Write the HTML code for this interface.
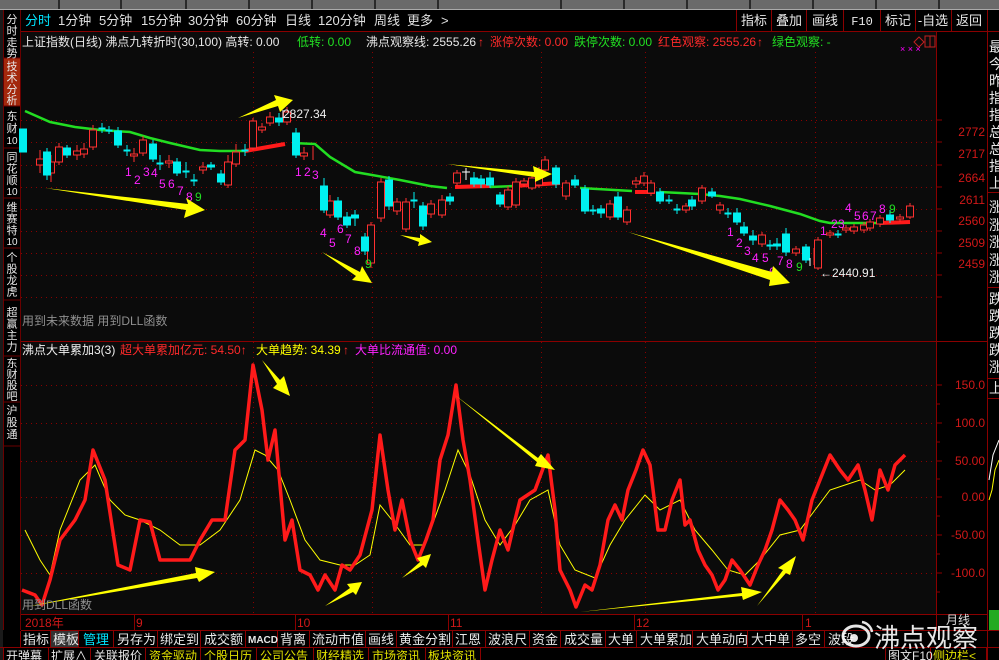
<!DOCTYPE html>
<html><head><meta charset="utf-8"><style>
html,body{margin:0;padding:0;background:#000;width:999px;height:660px;overflow:hidden}
svg{display:block;font-family:"Liberation Sans","Noto Sans CJK SC",sans-serif}
</style></head><body>
<svg width="999" height="660" viewBox="0 0 999 660" xmlns="http://www.w3.org/2000/svg">
<rect width="999" height="660" fill="#000"/>
<rect x="0" y="0" width="999" height="9" fill="#6a6a6a"/>
<g fill="#2a2a2a"><rect x="58" y="0" width="2" height="9"/><rect x="120" y="0" width="2" height="9"/><rect x="185" y="0" width="2" height="9"/><rect x="248" y="0" width="2" height="9"/><rect x="311" y="0" width="2" height="9"/><rect x="374" y="0" width="2" height="9"/><rect x="437" y="0" width="2" height="9"/><rect x="560" y="0" width="2" height="9"/><rect x="623" y="0" width="2" height="9"/><rect x="686" y="0" width="2" height="9"/><rect x="749" y="0" width="2" height="9"/><rect x="812" y="0" width="2" height="9"/><rect x="875" y="0" width="2" height="9"/><rect x="938" y="0" width="2" height="9"/></g>
<rect x="0" y="9" width="999" height="1" fill="#aaa"/>
<rect x="21" y="32" width="915" height="582" fill="#0b0b0b"/>
<rect x="0" y="10" width="3" height="650" fill="#1a1a1a"/>
<rect x="3" y="58" width="17" height="48" fill="#a3280c"/>
<g stroke="#6a0000" stroke-width="1"><line x1="3.5" y1="10" x2="3.5" y2="630"/><line x1="20.5" y1="10" x2="20.5" y2="630"/>
<line x1="3" y1="58" x2="20" y2="58"/><line x1="3" y1="106" x2="20" y2="106"/><line x1="3" y1="148" x2="20" y2="148"/><line x1="3" y1="198" x2="20" y2="198"/><line x1="3" y1="248" x2="20" y2="248"/><line x1="3" y1="300" x2="20" y2="300"/><line x1="3" y1="356" x2="20" y2="356"/><line x1="3" y1="402" x2="20" y2="402"/><line x1="3" y1="446" x2="20" y2="446"/></g>
<g fill="#e8e8e8" font-size="11" text-anchor="middle">
<text x="12" y="23">分</text><text x="12" y="34.5">时</text><text x="12" y="46">走</text><text x="12" y="57">势</text>
<text x="12" y="70">技</text><text x="12" y="81.5">术</text><text x="12" y="93">分</text><text x="12" y="104">析</text>
<text x="12" y="120">东</text><text x="12" y="132">财</text><text x="12" y="144" font-size="10">10</text>
<text x="12" y="161">同</text><text x="12" y="172.5">花</text><text x="12" y="184">顺</text><text x="12" y="195" font-size="10">10</text>
<text x="12" y="211">维</text><text x="12" y="222.5">赛</text><text x="12" y="234">特</text><text x="12" y="245" font-size="10">10</text>
<text x="12" y="261">个</text><text x="12" y="272.5">股</text><text x="12" y="284">龙</text><text x="12" y="295.5">虎</text>
<text x="12" y="316">超</text><text x="12" y="327.5">赢</text><text x="12" y="339">主</text><text x="12" y="350.5">力</text>
<text x="12" y="367">东</text><text x="12" y="378">财</text><text x="12" y="389">股</text><text x="12" y="400">吧</text>
<text x="12" y="414">沪</text><text x="12" y="426">股</text><text x="12" y="438">通</text>
</g>
<g font-size="13" fill="#e0e0e0">
<text x="25" y="25" fill="#00e5ff">分时</text><text x="58" y="25">1分钟</text><text x="99" y="25">5分钟</text><text x="141" y="25">15分钟</text><text x="188" y="25">30分钟</text><text x="236" y="25">60分钟</text><text x="285" y="25">日线</text><text x="318" y="25">120分钟</text><text x="374" y="25">周线</text><text x="407" y="25">更多</text><text x="441" y="25">&gt;</text>
</g>
<g stroke="#8a0000" stroke-width="1" fill="none">
<line x1="21" y1="31.5" x2="999" y2="31.5"/>
<line x1="736.5" y1="10" x2="736.5" y2="31"/><line x1="771.5" y1="10" x2="771.5" y2="31"/><line x1="806.5" y1="10" x2="806.5" y2="31"/><line x1="843.5" y1="10" x2="843.5" y2="31"/><line x1="880.5" y1="10" x2="880.5" y2="31"/><line x1="915.5" y1="10" x2="915.5" y2="31"/><line x1="951.5" y1="10" x2="951.5" y2="31"/><line x1="987.5" y1="10" x2="987.5" y2="31"/>
</g>
<g font-size="13" fill="#e8e8e8" text-anchor="middle">
<text x="754" y="25">指标</text><text x="789" y="25">叠加</text><text x="825" y="25">画线</text><text x="862" y="25" font-size="12" font-family="Liberation Mono,monospace">F10</text><text x="898" y="25">标记</text><text x="933" y="25">-自选</text><text x="969" y="25">返回</text>
</g>
<g font-size="12">
<text x="22" y="46" fill="#e8e8e8">上证指数(日线) 沸点九转折时(30,100) 高转: 0.00</text>
<text x="297" y="46" fill="#22e022">低转: 0.00</text>
<text x="366" y="46" fill="#e8e8e8">沸点观察线: 2555.26</text>
<text x="478" y="46" fill="#ff2a2a">↑</text>
<text x="490" y="46" fill="#ff2a2a">涨停次数: 0.00</text>
<text x="574" y="46" fill="#22e022">跌停次数: 0.00</text>
<text x="658" y="46" fill="#ff2a2a">红色观察: 2555.26</text>
<text x="757" y="46" fill="#ff2a2a">↑</text>
<text x="772" y="46" fill="#22e022">绿色观察: -</text>
</g>
<g stroke="#c02020" fill="none"><path d="M914 42 l5 -5 l5 5 l-5 5z"/><rect x="925" y="36" width="10" height="11"/><line x1="930" y1="36" x2="930" y2="47"/></g>
<g fill="#ff00ff" font-size="9"><text x="900" y="52">× × ×</text></g>
<g stroke="#8a0000" stroke-width="1">
<line x1="936.5" y1="32" x2="936.5" y2="630"/>
<line x1="987.5" y1="32" x2="987.5" y2="660"/>
<line x1="21" y1="341.5" x2="988" y2="341.5"/>
<line x1="21" y1="614.5" x2="988" y2="614.5"/>
<line x1="21" y1="630.5" x2="999" y2="630.5"/>
<line x1="0" y1="647.5" x2="999" y2="647.5"/>
</g>
<g stroke="#8a0000" stroke-dasharray="1,4" stroke-width="1">
<line x1="21" y1="120.5" x2="936" y2="120.5"/><line x1="21" y1="142.5" x2="936" y2="142.5"/><line x1="21" y1="165.5" x2="936" y2="165.5"/><line x1="21" y1="187.5" x2="936" y2="187.5"/><line x1="21" y1="209.5" x2="936" y2="209.5"/><line x1="21" y1="231.5" x2="936" y2="231.5"/><line x1="21" y1="253.5" x2="936" y2="253.5"/><line x1="21" y1="275.5" x2="936" y2="275.5"/><line x1="21" y1="297.5" x2="936" y2="297.5"/>
<line x1="21" y1="385.5" x2="936" y2="385.5"/><line x1="21" y1="423.5" x2="936" y2="423.5"/><line x1="21" y1="461.5" x2="936" y2="461.5"/><line x1="21" y1="497.5" x2="936" y2="497.5"/><line x1="21" y1="535.5" x2="936" y2="535.5"/><line x1="21" y1="573.5" x2="936" y2="573.5"/>
<line x1="253.5" y1="52" x2="253.5" y2="614"/><line x1="372.5" y1="52" x2="372.5" y2="614"/><line x1="541.5" y1="52" x2="541.5" y2="614"/><line x1="645.5" y1="52" x2="645.5" y2="614"/><line x1="815.5" y1="52" x2="815.5" y2="614"/>
</g>
<g stroke="#8a0000"><path d="M936 120h6M936 142h6M936 165h6M936 187h6M936 209h6M936 231h6M936 253h6M936 275h6M936 297h6M936 385h6M936 423h6M936 461h6M936 497h6M936 535h6M936 573h6M936 404h4M936 442h4M936 479h4M936 516h4M936 554h4M936 592h4"/></g>
<g fill="#d01818" font-size="12" text-anchor="end">
<text x="985" y="136">2772</text><text x="985" y="158">2717</text><text x="985" y="182">2664</text><text x="985" y="204">2611</text><text x="985" y="225">2560</text><text x="985" y="247">2509</text><text x="985" y="268">2459</text>
<text x="985" y="389">150.0</text><text x="985" y="427">100.0</text><text x="985" y="465">50.00</text><text x="985" y="501">0.00</text><text x="985" y="539">-50.00</text><text x="985" y="577">-100.0</text>
</g>
<g fill="#e8e8e8" font-size="14">
<text x="989" y="52">最</text><text x="989" y="69">今</text><text x="989" y="86">昨</text><text x="989" y="103">指</text><text x="989" y="120">指</text><text x="989" y="137">总</text><text x="989" y="154">总</text><text x="989" y="171">指</text><text x="989" y="188">上</text>
<text x="989" y="212">涨</text><text x="989" y="230">涨</text><text x="989" y="247">涨</text><text x="989" y="265">涨</text><text x="989" y="282">涨</text>
<text x="989" y="304">跌</text><text x="989" y="321">跌</text><text x="989" y="338">跌</text><text x="989" y="355">跌</text><text x="989" y="372">涨</text><text x="989" y="393">上</text>
</g>
<g stroke="#8a0000"><line x1="988" y1="192.5" x2="999" y2="192.5"/><line x1="988" y1="287.5" x2="999" y2="287.5"/><line x1="988" y1="378.5" x2="999" y2="378.5"/><line x1="988" y1="398.5" x2="999" y2="398.5"/></g>
<polyline points="989,500 992,490 995,470 999,460" stroke="#ffff00" fill="none"/>
<polyline points="989,480 993,455 999,440" stroke="#fff" fill="none"/>
<rect x="989" y="610" width="10" height="20" fill="#22aa22"/>
<polyline fill="none" stroke="#22dd22" stroke-width="2.5" points="25,111 50,122 75,127 100,130 130,132 150,138 170,143 200,150 220,151 245,151"/>
<polyline fill="none" stroke="#ff1a1a" stroke-width="4" points="245,151 285,144"/>
<polyline fill="none" stroke="#22dd22" stroke-width="2.5" points="292,143 315,144 330,157 355,172 372,175 400,180 430,186 447,188"/>
<polyline fill="none" stroke="#ff1a1a" stroke-width="4" points="455,187 490,186"/>
<polyline fill="none" stroke="#22dd22" stroke-width="2.5" points="490,187 514,186"/>
<polyline fill="none" stroke="#ff1a1a" stroke-width="4" points="514,186 560,183"/>
<polyline fill="none" stroke="#22dd22" stroke-width="2.5" points="580,188 632,191"/>
<polyline fill="none" stroke="#ff1a1a" stroke-width="4" points="635,192 655,192"/>
<polyline fill="none" stroke="#22dd22" stroke-width="2.5" points="660,192 700,194 720,196 740,199 770,206 800,214 820,221 830,223 880,223"/>
<polyline fill="none" stroke="#ff1a1a" stroke-width="4" points="880,223 910,222"/>
<g stroke="#ff3030" stroke-width="1" fill="#0b0b0b">
<path d="M40 150V173M51 155V182M59 143V165M77 145V160M84 143V158M93 125V150M134 148V162M143 136V156M169 155V168M203 162V174M228 155V188M236 144V167M253 118V150M262 123V133M270 112V126M287 107V125M304 147V160M313 146V160M330 195V218M371 222V268M381 178V222M397 198V215M406 198V232M431 200V218M442 195V218M457 170V186M508 186V210M516 178V208M524 178V187M532 174V190M539 167V188M545 156V172M566 180V200M610 200V220M627 206V225M636 177V188M644 172V186M651 180V196M686 203V213M702 185V204M720 202V214M762 232V247M796 246V256M814 248V265M818 237V270M830 230V238M846 225V233M854 224V234M864 222V233M870 219V231M880 215V227M900 214V222M910 203V219"/>
<rect x="36.5" y="159" width="7" height="6"/><rect x="47.5" y="162" width="7" height="11"/><rect x="55.5" y="147" width="7" height="15"/><rect x="73.5" y="151" width="7" height="4"/><rect x="80.5" y="149" width="7" height="5"/><rect x="89.5" y="130" width="7" height="17"/><rect x="130.5" y="154" width="7" height="2"/><rect x="139.5" y="140" width="7" height="13"/><rect x="165.5" y="161" width="7" height="2"/><rect x="199.5" y="167" width="7" height="3"/><rect x="224.5" y="162" width="7" height="23"/><rect x="232.5" y="152" width="7" height="12"/><rect x="249.5" y="121" width="7" height="27"/><rect x="258.5" y="127" width="7" height="3"/><rect x="266.5" y="117" width="7" height="6"/><rect x="283.5" y="112" width="7" height="10"/><rect x="300.5" y="153" width="7" height="3"/><rect x="326.5" y="201" width="7" height="14"/><rect x="367.5" y="225" width="7" height="38"/><rect x="377.5" y="182" width="7" height="36"/><rect x="393.5" y="202" width="7" height="9"/><rect x="402.5" y="202" width="7" height="27"/><rect x="427.5" y="204" width="7" height="10"/><rect x="438.5" y="200" width="7" height="15"/><rect x="453.5" y="173" width="7" height="10"/><rect x="504.5" y="190" width="7" height="17"/><rect x="512.5" y="182" width="7" height="23"/><rect x="520.5" y="181" width="7" height="3"/><rect x="528.5" y="178" width="7" height="10"/><rect x="535.5" y="171" width="7" height="14"/><rect x="541.5" y="160" width="7" height="10"/><rect x="562.5" y="183" width="7" height="13"/><rect x="606.5" y="204" width="7" height="13"/><rect x="623.5" y="210" width="7" height="12"/><rect x="632.5" y="181" width="7" height="3"/><rect x="640.5" y="176" width="7" height="7"/><rect x="647.5" y="183" width="7" height="10"/><rect x="682.5" y="206" width="7" height="4"/><rect x="698.5" y="188" width="7" height="13"/><rect x="716.5" y="205" width="7" height="5"/><rect x="758.5" y="235" width="7" height="9"/><rect x="792.5" y="249" width="7" height="4"/><rect x="814.5" y="240" width="7" height="28"/><rect x="826.5" y="233" width="7" height="2"/><rect x="842.5" y="228" width="7" height="2"/><rect x="850.5" y="227" width="7" height="4"/><rect x="860.5" y="225" width="7" height="5"/><rect x="866.5" y="222" width="7" height="6"/><rect x="876.5" y="218" width="7" height="6"/><rect x="896.5" y="217" width="7" height="2"/><rect x="906.5" y="206" width="7" height="11"/>
</g>
<g stroke="#00f0f0" fill="#00f0f0">
<path d="M47 148V180M67 145V158M102 123V133M109 126V134M118 127V148M127 145V156M153 140V162M160 155V170M177 158V176M186 162V178M194 174V186M211 162V170M221 170V185M245 144V156M279 113V126M296 128V158M324 178V213M338 197V220M347 212V228M355 210V226M365 233V255M389 176V210M414 192V208M423 202V230M450 193V205M474 172V187M481 175V188M490 172V188M500 192V207M556 165V188M575 175V188M585 185V214M593 205V215M601 205V218M618 192V220M660 188V204M669 195V204M677 204V214M692 196V210M712 188V198M728 208V218M737 208V225M744 222V236M753 230V245M770 240V250M777 238V250M786 228V256M806 244V263M838 230V238M890 210V223"/>
<rect x="19.5" y="129" width="7" height="23"/><rect x="43.5" y="152" width="7" height="23"/><rect x="63.5" y="148" width="7" height="7"/><rect x="99" y="128" width="6" height="1"/><rect x="106" y="130" width="6" height="1"/><rect x="114.5" y="131" width="7" height="14"/><rect x="124" y="150" width="6" height="1"/><rect x="149.5" y="144" width="7" height="15"/><rect x="157" y="163" width="6" height="1"/><rect x="173.5" y="162" width="7" height="11"/><rect x="183" y="171" width="6" height="1"/><rect x="191" y="180" width="6" height="1"/><rect x="207.5" y="165" width="7" height="2"/><rect x="217.5" y="174" width="7" height="8"/><rect x="242" y="150" width="6" height="1"/><rect x="275.5" y="118" width="7" height="4"/><rect x="292.5" y="133" width="7" height="22"/><rect x="320.5" y="186" width="7" height="24"/><rect x="334.5" y="201" width="7" height="16"/><rect x="343.5" y="217" width="7" height="8"/><rect x="351.5" y="215" width="7" height="3"/><rect x="361.5" y="237" width="7" height="14"/><rect x="385.5" y="180" width="7" height="26"/><rect x="411" y="200" width="6" height="1"/><rect x="419.5" y="206" width="7" height="20"/><rect x="446.5" y="197" width="7" height="4"/><rect x="470.5" y="178" width="7" height="6"/><rect x="477.5" y="179" width="7" height="5"/><rect x="486.5" y="178" width="7" height="7"/><rect x="496.5" y="195" width="7" height="9"/><rect x="552.5" y="168" width="7" height="16"/><rect x="571.5" y="180" width="7" height="5"/><rect x="581.5" y="189" width="7" height="22"/><rect x="590" y="210" width="6" height="1"/><rect x="597.5" y="209" width="7" height="4"/><rect x="614.5" y="197" width="7" height="20"/><rect x="656.5" y="192" width="7" height="9"/><rect x="666" y="200" width="6" height="1"/><rect x="674" y="209" width="6" height="1"/><rect x="688.5" y="200" width="7" height="6"/><rect x="708.5" y="192" width="7" height="4"/><rect x="725" y="213" width="6" height="1"/><rect x="733.5" y="213" width="7" height="9"/><rect x="740.5" y="227" width="7" height="6"/><rect x="749.5" y="236" width="7" height="4"/><rect x="767" y="245" width="6" height="1"/><rect x="773.5" y="244" width="7" height="2"/><rect x="782.5" y="234" width="7" height="18"/><rect x="802.5" y="247" width="7" height="13"/><rect x="835" y="234" width="6" height="1"/><rect x="886.5" y="215" width="7" height="5"/>
</g>
<g stroke="#fff"><path d="M466 168V180M462 172h8M283 110V118M810 258V266"/></g>
<g font-size="12" fill="#ff22ff">
<text x="125" y="176">1</text><text x="134" y="184">2</text><text x="143" y="176">3</text><text x="151" y="177">4</text><text x="159" y="188">5</text><text x="168" y="188">6</text><text x="177" y="195">7</text><text x="186" y="201">8</text>
<text x="295" y="176">1</text><text x="304" y="176">2</text><text x="312" y="179">3</text><text x="320" y="237">4</text><text x="329" y="247">5</text><text x="337" y="233">6</text><text x="345" y="243">7</text><text x="354" y="255">8</text>
<text x="727" y="236">1</text><text x="736" y="247">2</text><text x="744" y="255">3</text><text x="752" y="262">4</text><text x="762" y="262">5</text><text x="769" y="276">6</text><text x="777" y="265">7</text><text x="786" y="268">8</text>
<text x="820" y="235">1</text><text x="831" y="228">2</text><text x="838" y="228">3</text><text x="845" y="212">4</text><text x="854" y="220">5</text><text x="862" y="220">6</text><text x="870" y="220">7</text><text x="879" y="213">8</text>
</g>
<g font-size="12" fill="#22dd22"><text x="195" y="201">9</text><text x="365" y="268">9</text><text x="796" y="271">9</text><text x="889" y="213">9</text></g>
<g font-size="12" fill="#f0f0f0"><text x="283" y="118">2827.34</text><text x="820" y="277">←2440.91</text></g>
<text x="22" y="325" font-size="12" fill="#909090">用到未来数据 用到DLL函数</text>
<g font-size="12">
<text x="22" y="354" fill="#f0f0f0">沸点大单累加3(3)</text>
<text x="120" y="354" fill="#ff2a2a">超大单累加亿元: 54.50↑</text>
<text x="256" y="354" fill="#ffff00">大单趋势: 34.39</text><text x="343" y="354" fill="#ff2a2a">↑</text>
<text x="355" y="354" fill="#ff22ff">大单比流通值: 0.00</text>
</g>
<polyline fill="none" stroke="#ffff00" stroke-width="1" points="25,530 40,560 50,575 60,530 80,480 95,465 110,500 125,515 140,520 160,530 180,545 200,545 220,530 240,500 255,450 265,455 278,470 290,500 305,540 320,560 340,565 355,565 370,555 380,505 392,520 410,545 425,545 445,490 458,450 470,475 485,520 500,545 515,525 530,500 548,490 560,545 575,570 595,578 610,545 625,520 645,495 660,510 680,500 695,530 712,550 728,570 745,575 760,560 780,535 800,530 815,510 830,490 845,485 860,480 875,490 890,485 905,470"/>
<polyline fill="none" stroke="#ff1a1a" stroke-width="3.5" stroke-linejoin="round" points="22,590 35,595 42,605 50,580 60,540 75,520 85,500 93,450 105,480 118,565 130,570 140,520 150,522 160,560 175,560 190,560 200,540 212,520 225,520 235,450 245,440 253,365 262,410 268,460 275,430 285,540 292,520 300,570 310,575 318,590 325,575 335,590 342,565 350,570 360,555 372,510 380,435 388,490 395,530 402,500 410,540 418,560 426,540 433,520 440,460 448,435 456,385 463,440 470,480 478,540 485,590 492,560 500,530 508,550 515,520 520,500 535,490 548,455 555,510 560,570 570,590 576,607 585,585 592,590 600,565 608,520 615,505 622,520 628,490 636,470 643,450 650,465 658,530 665,530 672,500 680,480 685,525 690,520 698,550 705,565 712,575 718,590 725,580 732,560 740,570 750,585 758,565 765,550 772,530 780,500 788,510 795,520 803,540 812,500 820,480 830,455 840,470 848,480 858,465 865,490 872,520 880,470 888,490 895,465 905,455"/>
<g fill="#ffff00">
<polygon points="45,188 188,204 186,198 205,210 184,218 186,210"/>
<polygon points="238,118 276,100 274,95 293,100 280,112 278,106"/>
<polygon points="322,252 360,272 362,266 372,283 352,280 356,276"/>
<polygon points="400,235 420,238 420,234 432,242 418,246 419,242"/>
<polygon points="447,164 534,172 533,166 552,174 535,182 535,177"/>
<polygon points="628,232 772,272 773,266 790,283 769,286 770,280"/>
<polygon points="25,607 196,573 195,567 215,572 199,582 197,578"/>
<polygon points="262,360 280,380 284,376 290,396 273,388 277,384"/>
<polygon points="325,606 350,588 347,584 362,582 356,595 353,592"/>
<polygon points="402,578 420,562 417,558 431,554 426,568 423,565"/>
<polygon points="455,395 538,458 541,454 555,470 535,466 537,462"/>
<polygon points="580,612 742,593 741,587 762,592 743,600 742,596"/>
<polygon points="757,606 783,570 778,568 796,556 790,575 786,573"/>
</g>
<text x="22" y="609" font-size="12" fill="#909090">用到DLL函数</text>
<g stroke="#8a0000"><line x1="134.5" y1="614" x2="134.5" y2="630"/><line x1="295.5" y1="614" x2="295.5" y2="630"/><line x1="448.5" y1="614" x2="448.5" y2="630"/><line x1="634.5" y1="614" x2="634.5" y2="630"/><line x1="802.5" y1="614" x2="802.5" y2="630"/></g>
<g font-size="12" fill="#d01818"><text x="25" y="627">2018年</text><text x="136" y="627">9</text><text x="297" y="627">10</text><text x="450" y="627">11</text><text x="636" y="627">12</text><text x="805" y="627">1</text></g>
<text x="946" y="624" font-size="12" fill="#ddd">月线</text>
<rect x="50" y="631" width="28" height="16" fill="#333"/>
<g stroke="#8a0000"><path d="M20.5 631V647M50.5 631V647M78.5 631V647M113.5 631V647M157.5 631V647M200.5 631V647M245.5 631V647M277.5 631V647M309.5 631V647M365.5 631V647M396.5 631V647M452.5 631V647M485.5 631V647M529.5 631V647M560.5 631V647M605.5 631V647M636.5 631V647M692.5 631V647M747.5 631V647M792.5 631V647M824.5 631V647"/></g>
<g font-size="13" fill="#e8e8e8">
<text x="23" y="644">指标</text><text x="53" y="644">模板</text><text x="83" y="644" fill="#00e5ff">管理</text><text x="117" y="644">另存为</text><text x="160" y="644">绑定到</text><text x="204" y="644">成交额</text><text x="248" y="643" font-size="10" font-weight="bold">MACD</text><text x="280" y="644">背离</text><text x="312" y="644">流动市值</text><text x="368" y="644">画线</text><text x="399" y="644">黄金分割</text><text x="455" y="644">江恩</text><text x="488" y="644">波浪尺</text><text x="532" y="644">资金</text><text x="564" y="644">成交量</text><text x="608" y="644">大单</text><text x="640" y="644">大单累加</text><text x="696" y="644">大单动向</text><text x="751" y="644">大中单</text><text x="795" y="644">多空</text><text x="828" y="644">波段</text>
</g>
<g fill="#fff" opacity="0.9">
<ellipse cx="856" cy="636" rx="13" ry="10" fill="none" stroke="#fff" stroke-width="3"/>
<circle cx="854" cy="638" r="4"/>
<path d="M862 622a12 12 0 0 1 10 10" stroke="#fff" stroke-width="2.5" fill="none"/>
<text x="874" y="647" font-size="26">沸点观察</text>
</g>
<g stroke="#8a0000"><path d="M3.5 648V660M48.5 648V660M90.5 648V660M145.5 648V660M200.5 648V660M256.5 648V660M313.5 648V660M368.5 648V660M425.5 648V660M480.5 648V660M885.5 648V660M930.5 648V660M986.5 648V660"/></g>
<g font-size="12">
<text x="6" y="660" fill="#e8e8e8">开弹幕</text><text x="51" y="660" fill="#e8e8e8">扩展∧</text><text x="94" y="660" fill="#e8e8e8">关联报价</text><text x="149" y="660" fill="#e0e000">资金驱动</text><text x="204" y="660" fill="#e0e000">个股日历</text><text x="260" y="660" fill="#e0e000">公司公告</text><text x="316" y="660" fill="#e0e000">财经精选</text><text x="372" y="660" fill="#e0e000">市场资讯</text><text x="428" y="660" fill="#e0e000">板块资讯</text>
<text x="888" y="660" fill="#e8e8e8">图文F10</text><text x="933" y="660" fill="#e0e000">侧边栏&lt;</text>
</g>
</svg>
</body></html>
